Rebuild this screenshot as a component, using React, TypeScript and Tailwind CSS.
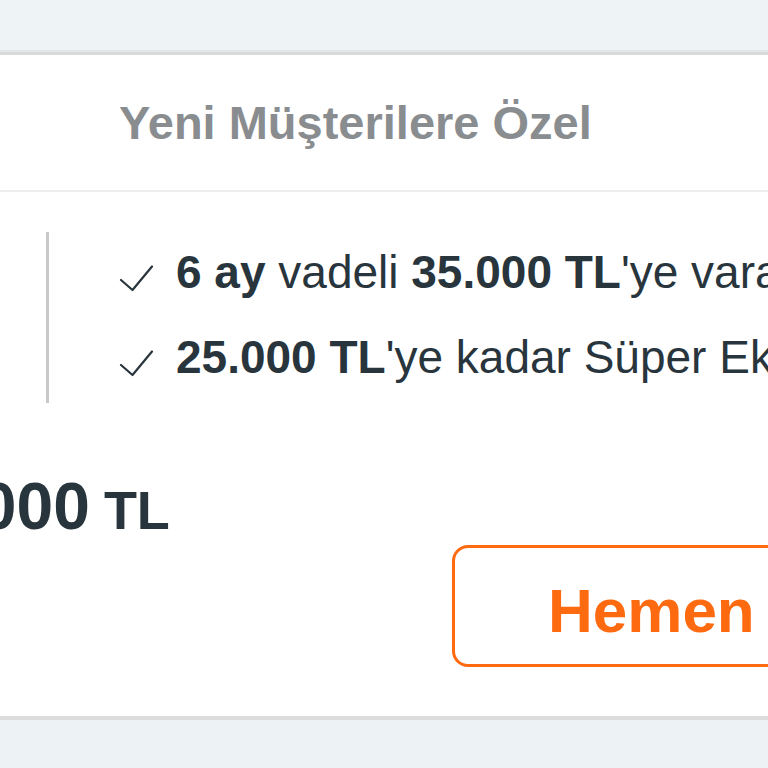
import React from "react";

function Check() {
  return (
    <svg width="35" height="27" viewBox="0 0 35 27" className="shrink-0 mt-[19px]" fill="none">
      <path d="M2 15 L13.5 25 L33 1.5" stroke="#29353d" strokeWidth="2.2" strokeLinecap="round" strokeLinejoin="round" />
    </svg>
  );
}

export default function App() {
  return (
    <div
      className="w-[768px] h-[768px] overflow-hidden bg-[#eef3f6] flex flex-col"
      style={{ fontFamily: '"Liberation Sans", Arial, sans-serif' }}
    >
      <div className="h-[50px] shrink-0 bg-[#eef3f6]" />
      <div className="h-[2px] shrink-0 bg-[#e4e6e7]" />
      <div className="h-[3px] shrink-0 bg-[#d9dadb]" />
      <div className="bg-white shrink-0 flex flex-col">
        <div className="h-[135px] flex items-center pl-[119px]">
          <h2 className="text-[47px] font-bold text-[#8a8d90] whitespace-nowrap leading-none">
            Yeni Müşterilere Özel
          </h2>
        </div>
        <div className="h-[2px] bg-[#eceeef]" />
        <div className="pt-[40px] flex">
          <div className="ml-[46px] w-[3px] h-[171px] bg-[#c9c9c9] shrink-0" />
          <ul className="ml-[70px] mt-[14px] flex flex-col gap-[32px] text-[46px] leading-[53px] text-[#29353d] whitespace-nowrap">
            <li className="flex items-start">
              <Check />
              <span className="ml-[22px]">
                <b>6 ay</b> vadeli <b>35.000 TL</b>'ye varan İhtiyaç Kredisi
              </span>
            </li>
            <li className="flex items-start">
              <Check />
              <span className="ml-[22px]">
                <b>25.000 TL</b>'ye kadar Süper Ek Hesap
              </span>
            </li>
          </ul>
        </div>
        <div className="mt-[70px] -ml-[112px] flex items-baseline whitespace-nowrap text-[#29353d] font-bold leading-none">
          <span className="text-[66px]">35.000</span>
          <span className="text-[54px] ml-[14px]">TL</span>
        </div>
        <div className="mt-[6px] ml-[452px] mb-[49px]">
          <div className="w-[640px] h-[122px] border-[3px] border-[#fe6a10] rounded-[16px] flex items-center pl-[93px] pt-[10px] whitespace-nowrap">
            <span className="text-[62px] font-bold text-[#fe6a10] leading-none">Hemen Başvur</span>
          </div>
        </div>
      </div>
      <div className="h-[4px] shrink-0 bg-[#dcdcdc]" />
      <div className="flex-1 bg-[#edf2f5]" />
    </div>
  );
}
